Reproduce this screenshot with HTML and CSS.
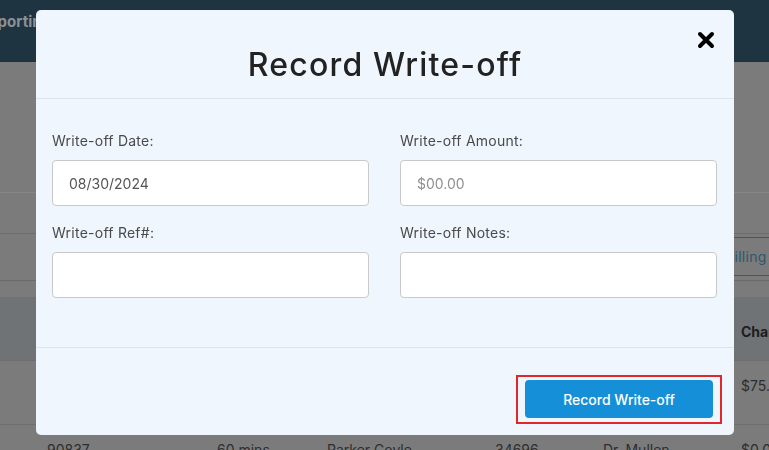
FILE: index.html
```html
<!DOCTYPE html>
<html lang="en">
<head>
<meta charset="utf-8">
<title>Record Write-off</title>
<link rel="stylesheet" href="styles.css">
</head>
<body>
<div class="page">
  <header class="topbar">
    <nav class="nav"><span class="nav-item">Reporting</span></nav>
  </header>
  <section class="intro"></section>
  <section class="toolbar"></section>
  <section class="filters">
    <button class="tab-btn" type="button">Billing</button>
  </section>
  <div class="table">
    <div class="trow thead">
      <span>Code</span><span>Length</span><span>Patient</span><span>Claim</span><span>Provider</span><span>Charge</span>
    </div>
    <div class="trow">
      <span>90837</span><span>60 mins</span><span>Parker Coyle</span><span>34696</span><span>Dr. Mullen</span><span>$75.00</span>
    </div>
    <div class="trow">
      <span>90837</span><span>60 mins</span><span>Parker Coyle</span><span>34696</span><span>Dr. Mullen</span><span>$0.00</span>
    </div>
  </div>
</div>

<div class="modal" role="dialog" aria-labelledby="modal-title">
  <div class="modal-header">
    <h2 id="modal-title" class="modal-title">Record Write-off</h2>
    <button class="close-btn" type="button" aria-label="Close">
      <svg width="18" height="18" viewBox="0 0 18 18" aria-hidden="true">
        <path d="M3 3 L15 15 M15 3 L3 15" stroke="#000" stroke-width="4" stroke-linecap="round" fill="none"/>
      </svg>
    </button>
  </div>
  <div class="modal-body">
    <div class="field">
      <label class="label">Write-off Date:</label>
      <input class="input" type="text" value="08/30/2024">
    </div>
    <div class="field">
      <label class="label">Write-off Amount:</label>
      <input class="input" type="text" placeholder="$00.00">
    </div>
    <div class="field">
      <label class="label">Write-off Ref#:</label>
      <input class="input" type="text">
    </div>
    <div class="field">
      <label class="label">Write-off Notes:</label>
      <input class="input" type="text">
    </div>
  </div>
  <div class="modal-footer">
    <div class="highlight">
      <button class="primary-btn" type="button">Record Write-off</button>
    </div>
  </div>
</div>
</body>
</html>
```

FILE: styles.css
```css
* { box-sizing: border-box; }

html, body {
  margin: 0;
  padding: 0;
}

body {
  width: 769px;
  height: 450px;
  overflow: hidden;
  background: #7b7b7b;
  font-family: Inter, "Noto Sans", sans-serif;
  color: #2b2b2b;
}

.page {
  width: 769px;
}

.topbar {
  height: 62px;
  background: #1f3441;
  display: flex;
  align-items: flex-start;
}

.nav {
  display: flex;
  padding-top: 12px;
}

.nav-item {
  margin-left: -21px;
  font-size: 15px;
  font-weight: 700;
  color: #8b9196;
  line-height: 20px;
}

.intro {
  height: 131px;
  border-bottom: 1px solid #868686;
}

.toolbar {
  height: 41px;
  border-bottom: 1px solid #6d6d6d;
}

.filters {
  height: 47px;
  border-bottom: 1px solid #6a6a6a;
  display: flex;
  justify-content: flex-end;
  align-items: flex-start;
  padding-top: 3px;
}

.tab-btn {
  margin-right: -70px;
  width: 120px;
  height: 39px;
  background: transparent;
  border: 1px solid #2a6277;
  border-radius: 4px;
  color: #2a5a6d;
  font-family: inherit;
  font-size: 14px;
  text-align: left;
  padding-left: 5px;
  letter-spacing: 0.3px;
}

.table {
  margin-top: 16px;
}

.trow {
  display: grid;
  grid-template-columns: 170px 110px 168px 108px 138px 1fr;
  padding-left: 47px;
  height: 64px;
  align-items: center;
  border-bottom: 1px solid #6e6e6e;
  font-size: 14px;
  color: #2e2e2e;
}

.trow span { white-space: nowrap; }

.thead {
  background: #6f7375;
  font-weight: 700;
  color: #1e1e1e;
  height: 64px;
  padding-top: 6px;
}

.trow:nth-child(2) { padding-bottom: 14px; }
.trow:nth-child(3) { align-items: start; padding-top: 16px; }

/* Modal */
.modal {
  position: fixed;
  left: 36px;
  top: 10px;
  width: 698px;
  background: #eff6fe;
  border-radius: 5px;
  overflow: hidden;
}

.modal-header {
  position: relative;
  padding: 34px 16px 12px;
  border-bottom: 1px solid #dce3ea;
}

.modal-title {
  margin: 0;
  text-align: center;
  font-size: 32px;
  line-height: 42px;
  font-weight: 500;
  letter-spacing: 1.2px;
  color: #222;
}

.close-btn {
  position: absolute;
  top: 20px;
  right: 19px;
  width: 19px;
  height: 19px;
  padding: 0;
  border: 0;
  background: transparent;
  display: flex;
  align-items: center;
  justify-content: center;
}

.modal-body {
  display: grid;
  grid-template-columns: 1fr 1fr;
  column-gap: 31px;
  row-gap: 17px;
  padding: 32px 17px 49px 16px;
  border-bottom: 1px solid #dce3ea;
}

.field {
  display: flex;
  flex-direction: column;
}

.label {
  font-size: 14px;
  line-height: 20px;
  letter-spacing: 0.25px;
  color: #4a4a4a;
  margin-bottom: 9px;
}

.input {
  height: 46px;
  border: 1px solid #c9c9c9;
  border-radius: 4px;
  background: #fff;
  padding: 0 16px;
  font-family: inherit;
  font-size: 14px;
  color: #555;
  outline: none;
}

.input::placeholder {
  color: #8f8f8f;
}

.modal-footer {
  display: flex;
  justify-content: flex-end;
  padding: 27px 12px 11px;
}

.highlight {
  border: 2px solid #e3262b;
  padding: 3px 7px 4px;
}

.primary-btn {
  display: block;
  width: 188px;
  height: 38px;
  border: 0;
  border-radius: 4px;
  background: #1590d8;
  color: #fff;
  font-family: inherit;
  font-size: 14px;
  font-weight: 500;
}
```
